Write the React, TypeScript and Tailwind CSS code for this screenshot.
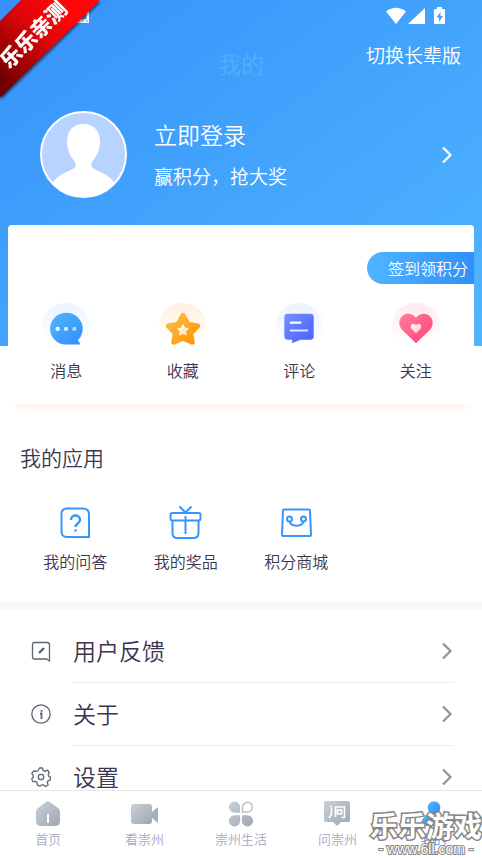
import type { ReactNode } from "react";

function Chevron({ className }: { className: string }) {
  return (
    <svg viewBox="0 0 14 20" className={`h-5 w-3.5 ${className}`} fill="none" stroke="currentColor" strokeWidth="2.2" aria-hidden="true">
      <path d="M3 2.500 10.500 10 3 17.500" />
    </svg>
  );
}

function Ribbon() {
  return (
    <div className="pointer-events-none absolute top-0 left-0 z-20 h-25 w-25 drop-shadow-[1px_2px_1px_rgba(0,0,0,0.5)]">
      <div className="relative h-full w-full bg-linear-to-tr from-[#700000] from-10% via-[#d8060a] via-50% to-[#ff0508] to-75% [clip-path:polygon(21%_0,100%_0,0_98%,0_21%)]">
        <span className="absolute top-[34px] left-[33px] -translate-x-1/2 -translate-y-1/2 -rotate-45 text-[21px] leading-none font-black whitespace-nowrap text-white">
          乐乐亲测
        </span>
      </div>
    </div>
  );
}

function StatusBar() {
  return (
    <div className="flex h-8 items-center justify-between pr-9 pl-[76px]">
      <svg viewBox="0 0 14 16" className="h-4 w-3.5" aria-hidden="true">
        <path d="M0 1h13v14H0z" fill="#fff" />
        <path d="M4 11V6l3-2 3 2v5zM2 13h2M6 13h2M10 13h2" fill="#3b97fb" stroke="#3b97fb" />
      </svg>
      <svg viewBox="0 0 60 18" className="h-[18px] w-15" fill="#fff" aria-hidden="true">
        <path d="M0 4.500Q10-3 20 4.500L10 17z" />
        <path d="M22 17 39 1v16z" />
        <path fillRule="evenodd" d="M49 2h2V0h5v2h2q1 0 1 1v13q0 1-1 1h-9q-1 0-1-1V3q0-1 1-1zM54.500 5l-4 5.500h2.500V15l4-6h-2.500z" />
      </svg>
    </div>
  );
}

function Avatar() {
  return (
    <svg viewBox="0 0 87 87" className="h-[87px] w-[87px] shrink-0" aria-hidden="true">
      <defs>
        <clipPath id="face">
          <circle cx="43.500" cy="43.500" r="42.500" />
        </clipPath>
      </defs>
      <circle cx="43.500" cy="43.500" r="42.500" fill="#b8d3ff" />
      <path
        clipPath="url(#face)"
        fill="#fff"
        d="M43.500 13C33 13 27 20 27 31c0 9 4 15 8 20 2 4 0 6-4 8-8 3-15 7-19 14v14h63V73c-4-7-11-11-19-14-4-2-6-4-4-8 4-5 8-11 8-20 0-11-6-18-16.500-18z"
      />
      <circle cx="43.500" cy="43.500" r="42.500" fill="none" stroke="#fff" strokeWidth="2" />
    </svg>
  );
}

function Gradients() {
  return (
    <svg className="absolute h-0 w-0" aria-hidden="true">
      <defs>
        <linearGradient id="blue" x1="0" y1="0" x2="1" y2="1"><stop stopColor="#52b5ff" /><stop offset="1" stopColor="#2e8ffb" /></linearGradient>
        <linearGradient id="orange" x1="0" y1="0" x2="1" y2="1"><stop stopColor="#ffbd4c" /><stop offset="1" stopColor="#ff9500" /></linearGradient>
        <linearGradient id="indigo" x1="0" y1="0" x2="1" y2="1"><stop stopColor="#7393ff" /><stop offset="1" stopColor="#4a5cff" /></linearGradient>
        <linearGradient id="pink" x1="0" y1="0" x2="1" y2="1"><stop stopColor="#ff7f9f" /><stop offset="1" stopColor="#ff4271" /></linearGradient>
        <linearGradient id="gray" x1="0" y1="0" x2="1" y2="1"><stop stopColor="#c8d0d8" /><stop offset="1" stopColor="#a0a7b0" /></linearGradient>
        <linearGradient id="fade" x1="0" y1="0" x2="1" y2="1"><stop stopColor="#fff" /><stop offset="1" stopColor="#fff" stopOpacity="0.6" /></linearGradient>
      </defs>
    </svg>
  );
}

const shortcuts: { label: string; halo: string; art: ReactNode }[] = [
  {
    label: "消息",
    halo: "from-[#eaf5ff]",
    art: (
      <>
        <path d="M24.500 10a16.200 16.200 0 1 0 0 32.400H38c1 0 1-1 .5-1.500L36.500 38A16.200 16.200 0 0 0 24.500 10z" fill="url(#blue)" />
        <circle cx="16" cy="26.500" r="2.200" fill="#fff" />
        <circle cx="24.500" cy="26.500" r="2.200" fill="#fff" opacity=".8" />
        <circle cx="33" cy="26.500" r="2.200" fill="#fff" opacity=".6" />
      </>
    ),
  },
  {
    label: "收藏",
    halo: "from-[#fff0df]",
    art: (
      <>
        <path d="M24.500 12.500 29.500 21.500 39.500 23.500 32.500 31 34 40 24.500 36 15 40 16.500 31 9.500 23.500 19.500 21.500z" fill="url(#orange)" stroke="url(#orange)" strokeWidth="5" strokeLinejoin="round" />
        <path d="m24.500 22 1.800 3.400 3.700.8-2.600 2.700.5 3.700-3.400-1.600-3.400 1.600.5-3.700-2.600-2.700 3.700-.8z" fill="url(#fade)" stroke="url(#fade)" strokeLinejoin="round" />
      </>
    ),
  },
  {
    label: "评论",
    halo: "from-[#eef1ff]",
    art: (
      <>
        <path d="M13 11h23a3.500 3.500 0 0 1 3.500 3.500V34a3.500 3.500 0 0 1-3.500 3.500H26L17.500 41v-3.500H13A3.500 3.500 0 0 1 9.500 34V14.500A3.500 3.500 0 0 1 13 11z" fill="url(#indigo)" />
        <rect x="15" y="19" width="12" height="2.200" rx="1" fill="#fff" />
        <rect x="15" y="27" width="19" height="2.200" rx="1" fill="#fff" opacity=".8" />
      </>
    ),
  },
  {
    label: "关注",
    halo: "from-[#ffe9ed]",
    art: (
      <>
        <path d="M24.500 41 10 27C6 22 7 16 11 13c4.500-3.500 10-2 13.500 2 3.500-4 9-5.500 13.500-2 4 3 5 9 1 14z" fill="url(#pink)" />
        <path d="M24.500 31 20 26.500c-1.500-2-.8-4 .5-5 1.500-1 3 0 4 1.200 1-1.200 2.500-2.200 4-1.200 1.300 1 2 3 .5 5z" fill="url(#fade)" />
      </>
    ),
  },
];

const apps: { label: string; art: ReactNode }[] = [
  {
    label: "我的问答",
    art: (
      <>
        <path d="M8 2.500h16q6 0 6 6v22.500H8q-5.500 0-5.500-5.500V8q0-5.500 5.500-5.500z" />
        <path d="M12 14c0-6 9-6 9 0 0 3.500-4.500 3.500-4.500 7" strokeWidth="2.400" />
        <path d="M15.300 24.500h2.400" strokeWidth="2.200" />
      </>
    ),
  },
  {
    label: "我的奖品",
    art: (
      <>
        <rect x="1.500" y="7" width="30" height="7.500" rx="2" />
        <path d="M3.500 14.500V27q0 5 5 5h16q5 0 5-5V14.500M16.500 10v18M10.500 .5l6 6 6-6" />
      </>
    ),
  },
  {
    label: "积分商城",
    art: (
      <>
        <path d="M4 3.500h25q1 0 1 1L31 29q0 1-1 1H3q-1 0-1-1L3 4.500q0-1 1-1z" />
        <circle cx="9.500" cy="13" r="2.500" />
        <circle cx="23.500" cy="13" r="2.500" />
        <path d="M9.500 15.500c1.500 5.500 12.500 5.500 14 0" />
      </>
    ),
  },
];

const settings: { label: string; art: ReactNode }[] = [
  {
    label: "用户反馈",
    art: (
      <>
        <path d="M3.500 1.500H16q2.500 0 2.500 2.500v16l-3-2h-12q-2 0-2-2V3.500q0-2 2-2z" />
        <path d="m8 12 5-5" strokeWidth="2.400" />
      </>
    ),
  },
  {
    label: "关于",
    art: (
      <>
        <circle cx="10" cy="10" r="9.200" />
        <path d="M10.500 6v1.800M9 9.500h1.500V15" strokeWidth="1.800" />
      </>
    ),
  },
  {
    label: "设置",
    art: (
      <>
        <path d="m8.500 1h3l.7 2.600 1.900.8 2.400-1.300 1.800 2.400-1.200 2.100.6 1.700 1.800.7v2.800l-2.500 1-.7 1.700.8 2.500-2.500 1.500-2-1.600h-1.900L9 19.200l-2.600-1-.4-2.600-1.400-1.200-2.500.3-1.400-2.500L2.300 10 2.200 8.200.8 6.300l1.900-2.400 2.500.6 1.900-1z" strokeLinejoin="round" />
        <circle cx="10" cy="10" r="2.700" />
      </>
    ),
  },
];

const tabs: { label: string; active?: boolean; art: ReactNode }[] = [
  {
    label: "首页",
    art: (
      <>
        <path d="M12.500 1.800q1.500-1.200 3 0L24 8q2 1.500 2 4v9q0 5-5 5H7q-5 0-5-5v-9q0-2.500 2-4z" fill="url(#gray)" />
        <rect x="13" y="14" width="2" height="9" rx="1" fill="#fff" />
      </>
    ),
  },
  {
    label: "看崇州",
    art: (
      <>
        <rect x="0" y="4" width="21" height="20" rx="3" fill="url(#gray)" />
        <path d="m21 12 6-5v16l-6-5z" fill="#a6adb6" />
      </>
    ),
  },
  {
    label: "崇州生活",
    art: (
      <>
        <path d="M7.500 1.500a5.600 5.600 0 0 1 5.600 5.600v5.600H7.500a5.600 5.600 0 0 1 0-11.200zM7.500 26.500a5.600 5.600 0 0 0 5.600-5.600v-5.600H7.500a5.600 5.600 0 0 0 0 11.200zM20.500 26.500a5.600 5.600 0 0 1-5.600-5.600v-5.600h5.600a5.600 5.600 0 0 1 0 11.200z" fill="url(#gray)" />
        <path d="M20.500 2.200a4.900 4.900 0 0 0-4.900 4.900V12h4.900a4.900 4.900 0 0 0 0-9.800z" fill="none" stroke="#bac2ca" strokeWidth="1.500" />
      </>
    ),
  },
  {
    label: "问崇州",
    art: (
      <>
        <path d="M3 1h22q2 0 2 2v17q0 2-2 2h-7l-4 4-4-4H3q-2 0-2-2V3q0-2 2-2z" fill="url(#gray)" />
        <path d="m7.500 5.500 1 2M8.500 8v6l-2.500 4M12 7h9.500v10.500h-3M12.500 7v10M14.500 10h4v4h-4z" fill="none" stroke="#fff" strokeWidth="1.600" />
      </>
    ),
  },
  {
    label: "我的",
    active: true,
    art: (
      <>
        <circle cx="14" cy="7.500" r="6.300" fill="url(#blue)" />
        <path d="M1 26q0-12 13-12t13 12z" fill="url(#blue)" />
      </>
    ),
  },
];

export default function App() {
  return (
    <div className="relative flex h-screen flex-col overflow-hidden bg-white font-['Noto_Sans_CJK_SC',sans-serif] font-[350] text-[#3a3650]">
      <Gradients />
      <Ribbon />
      <main className="min-h-0 flex-1 overflow-hidden">
        <header className="h-[346px] bg-linear-to-br from-[#3692fa] to-[#50b5ff] text-white">
          <StatusBar />
          <div className="grid h-[66px] grid-cols-3 items-center">
            <h1 className="col-start-2 mb-1 text-center text-[23px] leading-8 font-[350] text-white/15">我的</h1>
            <button className="mb-5 justify-self-end pr-[21px] text-[19px] leading-6">切换长辈版</button>
          </div>
          <button className="flex w-full items-center pt-[13px] pr-7 pl-10 text-left">
            <Avatar />
            <span className="ml-[27px] flex flex-1 flex-col gap-2.5">
              <span className="text-[23px] leading-8">立即登录</span>
              <span className="text-[19px] leading-8">赢积分，抢大奖</span>
            </span>
            <Chevron className="text-white" />
          </button>
        </header>

        <section className="relative mx-2 -mt-[121px] h-[179px] rounded-t bg-white pt-[27px] shadow-[0_10px_8px_-8px_#ffe9df]">
          <button className="ml-auto block h-8 rounded-l-full bg-linear-to-r from-[#50b5ff] to-[#318ffa] pr-1.5 pl-[21px] text-base leading-[30px] text-white">
            签到领积分
          </button>
          <div className="mt-[19px] grid grid-cols-4">
            {shortcuts.map((item) => (
              <button key={item.label} className="flex flex-col items-center gap-[7px]">
                <span className={`rounded-full bg-linear-to-b ${item.halo} to-white to-80%`}>
                  <svg viewBox="0 0 49 49" className="h-12 w-12" aria-hidden="true">{item.art}</svg>
                </span>
                <span className="text-base leading-6">{item.label}</span>
              </button>
            ))}
          </div>
        </section>

        <section className="px-5 pt-[37px] pb-[29px]">
          <h2 className="text-[21px] leading-8 font-[350]">我的应用</h2>
          <div className="mt-[33px] grid grid-cols-4">
            {apps.map((app) => (
              <button key={app.label} className="flex flex-col items-center gap-[9px]">
                <svg viewBox="0 0 33 34" className="h-[34px] w-[33px]" fill="none" stroke="#3795fb" strokeWidth="2" aria-hidden="true">
                  {app.art}
                </svg>
                <span className="text-base leading-6">{app.label}</span>
              </button>
            ))}
          </div>
        </section>

        <div className="h-2 bg-[#f7f7f7]" />

        <ul className="mt-2.5">
          {settings.map((row) => (
            <li key={row.label}>
              <button className="flex w-full items-center pr-7 pl-[31px] text-left">
                <svg viewBox="0 0 20 21" className="h-[21px] w-5" fill="none" stroke="#5c6470" strokeWidth="1.300" aria-hidden="true">
                  {row.art}
                </svg>
                <span className="ml-[21px] flex h-[63px] flex-1 items-center justify-between border-b border-[#ebebeb] text-[23px]">
                  <span className="pb-0.5 pl-px">{row.label}</span>
                  <Chevron className="text-[#8d95a3]" />
                </span>
              </button>
            </li>
          ))}
        </ul>
      </main>

      <nav className="grid h-[68px] shrink-0 grid-cols-5 border-t border-[#e8e8e8] bg-white pt-[9px]">
        {tabs.map((tab) => (
          <button key={tab.label} className={`flex flex-col items-center gap-px ${tab.active ? "text-[#3795fb]" : "text-[#aaa9bd]"}`}>
            <svg viewBox="0 0 28 28" className="h-7 w-7" aria-hidden="true">{tab.art}</svg>
            <span className="text-[13px] leading-5">{tab.label}</span>
          </button>
        ))}
      </nav>

      <div className="pointer-events-none absolute right-0 bottom-0 z-20 flex flex-col items-center text-white [paint-order:stroke_fill]">
        <span className="text-[28px] leading-8 font-bold [-webkit-text-stroke:3px_#858585]">乐乐游戏</span>
        <span className="pb-px font-['Liberation_Sans',sans-serif] text-sm leading-4 [-webkit-text-stroke:2px_#858585]">- www.6ll.com -</span>
      </div>
    </div>
  );
}
